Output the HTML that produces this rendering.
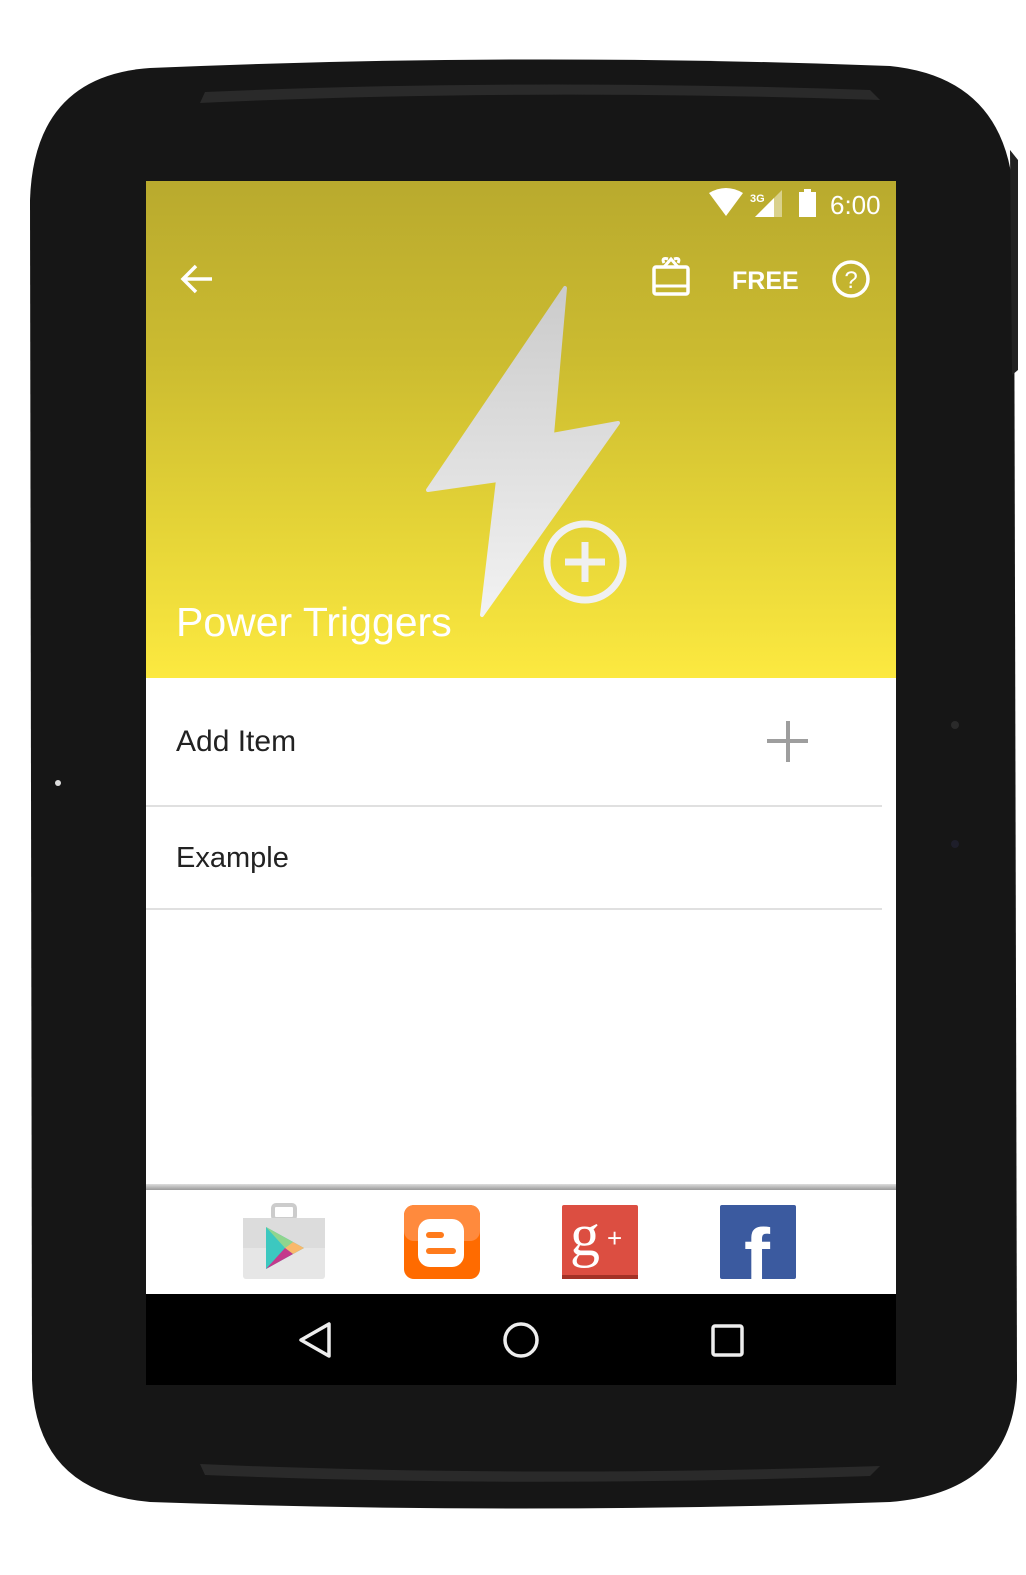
<!DOCTYPE html>
<html><head><meta charset="utf-8"><style>
*{margin:0;padding:0;box-sizing:border-box}
body{width:1026px;height:1575px;background:#fff;position:relative;overflow:hidden;font-family:"Liberation Sans",sans-serif}
.abs{position:absolute}
</style></head><body>
<svg class="abs" style="left:0;top:0" width="1026" height="1575">
 <path d="M150 68 Q520 52 890 66 Q1008 78 1014 200 L1017 1380 Q1014 1492 890 1502 Q520 1515 150 1502 Q36 1492 32 1380 L30 200 Q34 76 150 68Z" fill="#161616"/>
 <path d="M205 92 Q520 78 870 90 L880 100 Q520 88 200 103Z" fill="#2a2a2a"/>
 <path d="M205 1475 Q520 1488 870 1476 L880 1466 Q520 1478 200 1464Z" fill="#2a2a2a"/>
 <path d="M1010 150 L1018 160 L1018 370 L1012 375Z" fill="#222"/>
 <circle cx="58" cy="783" r="3" fill="#ddd"/>
 <circle cx="955" cy="725" r="4" fill="#2a2a2a"/>
 <circle cx="955" cy="844" r="4" fill="#1e1e2a"/>
</svg>
<div class="abs" style="left:146px;top:181px;width:750px;height:497px;background:linear-gradient(#b9aa2e,#cbbb30 35%,#e5d437 70%,#fce940)"></div>
<!-- status -->
<svg class="abs" style="left:700px;top:186px" width="196" height="36">
 <path d="M9 7 Q26 -3 43 7 L26 30Z" fill="#fff"/>
 <text x="50" y="16" font-size="11" fill="#fff" font-family="Liberation Sans" font-weight="bold">3G</text>
 <path d="M82 4 L82 31 L55 31Z" fill="#fff" opacity="0.45"/><path d="M74 12 L74 31 L55 31Z" fill="#fff"/>
 <rect x="99" y="6" width="17" height="25" fill="#fff"/><rect x="104" y="3" width="7" height="4" fill="#fff"/>
 <text x="130" y="28" font-size="26" fill="#fff" font-family="Liberation Sans">6:00</text>
</svg>
<!-- toolbar -->
<svg class="abs" style="left:176px;top:255px" width="700" height="50">
 <path d="M36 24 H8 M20 11 L7 24 L20 37" stroke="#fff" stroke-width="3.5" fill="none"/>
 <rect x="478" y="12" width="34" height="27" rx="2" stroke="#fff" stroke-width="3.5" fill="none"/>
 <path d="M478 31 H512" stroke="#fff" stroke-width="3"/>
 <path d="M488 12 L495 4 L502 12 M488 8 Q485 2 492 4 M502 8 Q505 2 498 4" stroke="#fff" stroke-width="3" fill="none"/>
 <text x="556" y="34" font-size="25" fill="#fff" font-family="Liberation Sans" font-weight="bold">FREE</text>
 <circle cx="675" cy="24" r="17" stroke="#fff" stroke-width="3.5" fill="none"/>
 <text x="675" y="33" text-anchor="middle" font-size="24" fill="#fff" font-family="Liberation Sans">?</text>
</svg>
<!-- bolt -->
<svg class="abs" style="left:0;top:0" width="1026" height="700">
 <defs><linearGradient id="bg" x1="0" y1="0" x2="0" y2="1"><stop offset="0" stop-color="#cbcbcb"/><stop offset="1" stop-color="#f2f2f2"/></linearGradient></defs>
 <path d="M565 288 L552 435 L618 423 L482 615 L498 480 L428 490Z" fill="url(#bg)" stroke="url(#bg)" stroke-width="4" stroke-linejoin="round"/>
 <circle cx="585" cy="562" r="38" stroke="#f0f0f0" stroke-width="7" fill="none"/>
 <path d="M585 542 V582 M565 562 H605" stroke="#f0f0f0" stroke-width="7"/>
</svg>
<div class="abs" style="left:176px;top:599px;font-size:41px;color:#fff">Power Triggers</div>
<div class="abs" style="left:146px;top:678px;width:750px;height:508px;background:#fff"></div>
<div class="abs" style="left:176px;top:725px;font-size:30px;color:#222">Add Item</div>
<svg class="abs" style="left:766px;top:721px" width="44" height="42"><path d="M22 0 V41 M1 20 H42" stroke="#9e9e9e" stroke-width="4"/></svg>
<div class="abs" style="left:146px;top:805px;width:736px;height:2px;background:#e0e0e0"></div>
<div class="abs" style="left:176px;top:842px;font-size:29px;color:#222">Example</div>
<div class="abs" style="left:146px;top:908px;width:736px;height:2px;background:#e0e0e0"></div>
<div class="abs" style="left:146px;top:1184px;width:750px;height:6px;background:linear-gradient(#ddd,#999)"></div>
<div class="abs" style="left:146px;top:1190px;width:750px;height:104px;background:#fff"></div>
<!-- social icons -->
<svg class="abs" style="left:0;top:1195px" width="1026" height="95">
 <rect x="273" y="10" width="22" height="14" rx="3" stroke="#ccc" stroke-width="4" fill="none"/>
 <rect x="243" y="23" width="82" height="61" rx="3" fill="#e6e6e6"/><rect x="243" y="23" width="82" height="30" fill="#dcdcdc"/>
 <path d="M266 32 L304 53 L266 74Z" fill="#3cc8c0"/><path d="M266 32 L293 47 L285 53Z" fill="#8fd58e"/><path d="M293 47 L304 53 L293 59 L285 53Z" fill="#f9b86b"/><path d="M266 74 L293 59 L285 53Z" fill="#c43a8c"/>
 <rect x="404" y="10" width="76" height="74" rx="10" fill="#ff6b00"/><rect x="404" y="10" width="76" height="36" rx="10" fill="#ff8a3d"/>
 <rect x="418" y="24" width="46" height="48" rx="12" fill="#fff"/><rect x="426" y="37" width="18" height="6" rx="3" fill="#ff7b1c"/><rect x="426" y="53" width="30" height="6" rx="3" fill="#ff7b1c"/>
 <rect x="562" y="10" width="76" height="74" rx="2" fill="#dc4e41"/><rect x="562" y="80" width="76" height="4" fill="#a33226"/>
 <text x="570" y="60" font-size="60" fill="#fff" font-family="Liberation Serif">g</text><text x="607" y="52" font-size="26" fill="#fff" font-family="Liberation Sans">+</text>
 <rect x="720" y="10" width="76" height="74" rx="2" fill="#3b5a9f"/>
 <text x="744" y="88" font-size="78" font-weight="bold" fill="#fff" font-family="Liberation Sans">f</text>
</svg>
<div class="abs" style="left:146px;top:1294px;width:750px;height:91px;background:#000"></div>
<svg class="abs" style="left:146px;top:1294px" width="750" height="91">
 <path d="M183 30 L183 62 L155 46Z" stroke="#eee" stroke-width="3.5" fill="none" stroke-linejoin="round"/>
 <ellipse cx="375" cy="46" rx="16" ry="16" stroke="#eee" stroke-width="3.5" fill="none"/>
 <rect x="567" y="32" width="29" height="29" rx="2" stroke="#eee" stroke-width="3.5" fill="none"/>
</svg>
</body></html>
